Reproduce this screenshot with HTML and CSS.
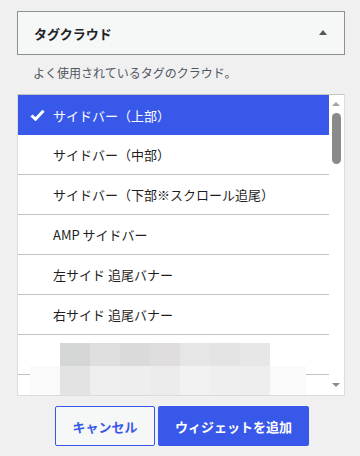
FILE: index.html
```html
<!DOCTYPE html>
<html lang="ja">
<head>
    <meta charset="UTF-8">
    <meta name="viewport" content="width=device-width, initial-scale=1.0">
    <title>ウィジェットを追加</title>
    <link rel="stylesheet" href="styles.css">
</head>
<body>
    <div class="panel">
        <!-- ウィジェット見出し -->
        <div class="widget-head">
            <span class="widget-title">タグクラウド</span>
            <span class="toggle"></span>
        </div>
        <p class="widget-desc">よく使用されているタグのクラウド。</p>

        <!-- サイドバー選択リスト -->
        <div class="area-list">
            <ul class="areas">
                <li class="area selected">
                    <svg class="check" width="15" height="12" viewBox="0 0 15 12"><path d="M1.5 6.5 L5.5 10.2 L13.5 1.8" fill="none" stroke="#fff" stroke-width="3"/></svg>
                    サイドバー（上部）
                </li>
                <li class="area">サイドバー（中部）</li>
                <li class="area">サイドバー（下部※スクロール追尾）</li>
                <li class="area">AMP サイドバー</li>
                <li class="area">左サイド 追尾バナー</li>
                <li class="area">右サイド 追尾バナー</li>
                <li class="area"></li>
                <li class="area"></li>
            </ul>
            <div class="scrollbar">
                <span class="arrow-up"></span>
                <span class="thumb"></span>
                <span class="arrow-down"></span>
            </div>
            <!-- モザイク部分 -->
            <div class="mosaic">
                <div class="mosaic-row top">
                    <i style="background:#d5d6d6"></i><i style="background:#e0dfdf"></i><i style="background:#dadada"></i><i style="background:#dfdddd"></i><i style="background:#e6e6e6"></i><i style="background:#e4e4e4"></i><i style="background:#e7e7e7"></i>
                </div>
                <div class="mosaic-row bottom">
                    <i style="background:#fafafa"></i><i style="background:#e3e3e3"></i><i style="background:#efefef"></i><i style="background:#eeeeee"></i><i style="background:#ececec"></i><i style="background:#f2f2f3"></i><i style="background:#efefef"></i><i style="background:#eeeeee"></i><i class="wide" style="background:#fafafa"></i>
                </div>
            </div>
        </div>

        <!-- 操作ボタン -->
        <div class="actions">
            <button class="btn btn-cancel">キャンセル</button>
            <button class="btn btn-add">ウィジェットを追加</button>
        </div>
    </div>
</body>
</html>
```

FILE: styles.css
```css
body {
    margin: 0;
    background-color: #f0f0f1;
    font-family: "Noto Sans CJK JP", "Noto Sans", sans-serif;
    color: #1e1e1e;
}
.panel {
    padding: 11px 15px 0 17px;
}
.widget-head {
    display: flex;
    align-items: center;
    justify-content: space-between;
    height: 42px;
    padding: 0 17px 0 16px;
    border: 1px solid #8c8f94;
    background-color: #f6f7f7;
}
.widget-title {
    font-size: 13px;
    font-weight: bold;
    color: #1d2327;
}
.toggle {
    width: 0;
    height: 0;
    border-left: 4px solid transparent;
    border-right: 4px solid transparent;
    border-bottom: 5px solid #50575e;
    margin-top: -1px;
}
.widget-desc {
    margin: 0;
    padding: 10px 0 0 16px;
    height: 29px;
    font-size: 12px;
    line-height: 16px;
    color: #50575e;
}
.area-list {
    position: relative;
    display: flex;
    height: 300px;
    border: 1px solid #dcdcde;
    border-top-color: #c3c4c7;
    background-color: #fff;
    overflow: hidden;
}
.areas {
    flex: 1;
    margin: 0;
    padding: 0;
    list-style: none;
}
.area {
    display: flex;
    align-items: center;
    height: 39px;
    padding-left: 35px;
    border-bottom: 1px solid #c3c4c7;
    font-size: 13px;
}
.area.selected {
    height: 40px;
    border-bottom: none;
    background-color: #3858e9;
    color: #fff;
    padding-left: 12px;
}
.check {
    margin-right: 8px;
}
.scrollbar {
    position: relative;
    width: 15px;
    background-color: #fff;
}
.arrow-up, .arrow-down {
    position: absolute;
    left: 3px;
    width: 0;
    height: 0;
    border-left: 4px solid transparent;
    border-right: 4px solid transparent;
}
.arrow-up {
    top: 7px;
    border-bottom: 4px solid #a3a3a3;
}
.arrow-down {
    bottom: 8px;
    border-top: 4px solid #8a8a8a;
}
.thumb {
    position: absolute;
    top: 18px;
    left: 3px;
    width: 9px;
    height: 51px;
    border-radius: 5px;
    background-color: #8a8a8a;
}
.mosaic {
    position: absolute;
    left: 12px;
    top: 248px;
}
.mosaic-row {
    display: flex;
}
.mosaic-row i {
    display: block;
    width: 30px;
}
.mosaic-row.top {
    margin-left: 30px;
    height: 23px;
}
.mosaic-row.bottom {
    height: 30px;
}
.mosaic-row i.wide {
    width: 36px;
}
.actions {
    display: flex;
    justify-content: center;
    gap: 3px;
    padding-top: 10px;
    margin-left: 2px;
}
.btn {
    height: 40px;
    font-family: inherit;
    font-size: 13px;
    font-weight: bold;
    border-radius: 2px;
    cursor: pointer;
}
.btn-cancel {
    width: 100px;
    border: 1px solid #3858e9;
    background-color: #f6f7f7;
    color: #3858e9;
}
.btn-add {
    width: 151px;
    border: none;
    background-color: #3858e9;
    color: #fff;
}
```
